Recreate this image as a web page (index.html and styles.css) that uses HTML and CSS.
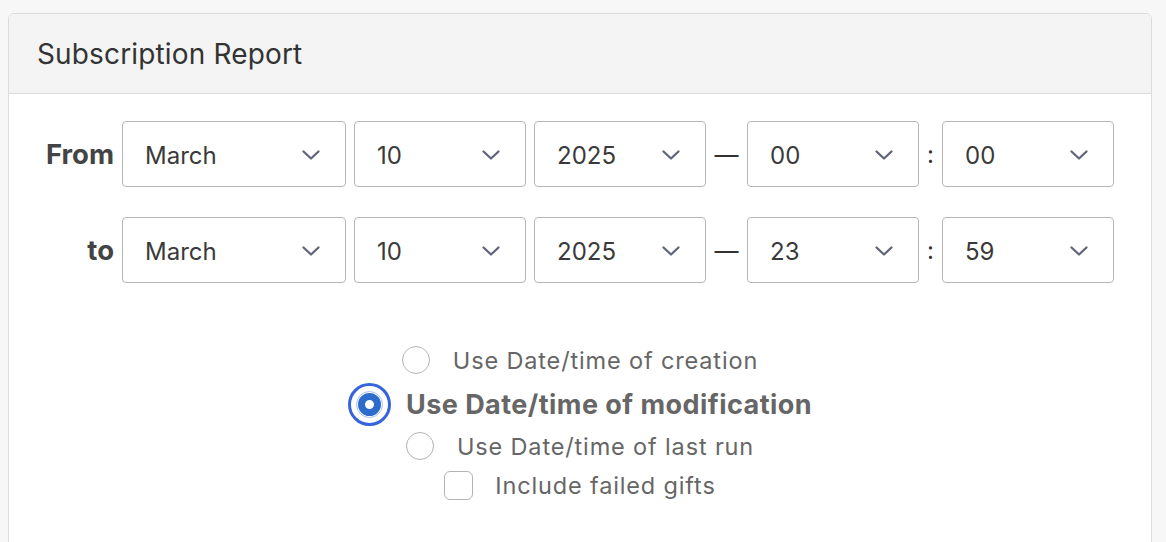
FILE: index.html
```html
<!DOCTYPE html>
<html lang="en">
<head>
<meta charset="utf-8">
<title>Subscription Report</title>
<link rel="stylesheet" href="styles.css">
</head>
<body>
<div class="card">
  <div class="card-header">Subscription Report</div>
  <div class="card-body">
    <div class="date-row">
      <label class="row-label">From</label>
      <div class="select sel-month"><span>March</span><svg class="chev" viewBox="0 0 18 10"><polyline points="1.5,1.5 9,8.5 16.5,1.5"/></svg></div>
      <div class="select"><span>10</span><svg class="chev" viewBox="0 0 18 10"><polyline points="1.5,1.5 9,8.5 16.5,1.5"/></svg></div>
      <div class="select"><span>2025</span><svg class="chev" viewBox="0 0 18 10"><polyline points="1.5,1.5 9,8.5 16.5,1.5"/></svg></div>
      <span class="sep dash">—</span>
      <div class="select"><span>00</span><svg class="chev" viewBox="0 0 18 10"><polyline points="1.5,1.5 9,8.5 16.5,1.5"/></svg></div>
      <span class="sep colon">:</span>
      <div class="select"><span>00</span><svg class="chev" viewBox="0 0 18 10"><polyline points="1.5,1.5 9,8.5 16.5,1.5"/></svg></div>
    </div>
    <div class="date-row">
      <label class="row-label">to</label>
      <div class="select sel-month"><span>March</span><svg class="chev" viewBox="0 0 18 10"><polyline points="1.5,1.5 9,8.5 16.5,1.5"/></svg></div>
      <div class="select"><span>10</span><svg class="chev" viewBox="0 0 18 10"><polyline points="1.5,1.5 9,8.5 16.5,1.5"/></svg></div>
      <div class="select"><span>2025</span><svg class="chev" viewBox="0 0 18 10"><polyline points="1.5,1.5 9,8.5 16.5,1.5"/></svg></div>
      <span class="sep dash">—</span>
      <div class="select"><span>23</span><svg class="chev" viewBox="0 0 18 10"><polyline points="1.5,1.5 9,8.5 16.5,1.5"/></svg></div>
      <span class="sep colon">:</span>
      <div class="select"><span>59</span><svg class="chev" viewBox="0 0 18 10"><polyline points="1.5,1.5 9,8.5 16.5,1.5"/></svg></div>
    </div>

    <div class="options">
      <div class="opt opt-1"><span class="radio"></span><span class="opt-label">Use Date/time of creation</span></div>
      <div class="opt opt-2"><span class="radio radio-on"><span class="radio-dot"></span></span><span class="opt-label opt-bold">Use Date/time of modification</span></div>
      <div class="opt opt-3"><span class="radio"></span><span class="opt-label">Use Date/time of last run</span></div>
      <div class="opt opt-4"><span class="checkbox"></span><span class="opt-label">Include failed gifts</span></div>
    </div>
  </div>
</div>
</body>
</html>
```

FILE: styles.css
```css
html, body {
  margin: 0;
  padding: 0;
}
html {
  overflow: hidden;
}
body {
  background: #f7f7f7;
  font-family: Inter, "Noto Sans", "Liberation Sans", sans-serif;
  color: #333;
  height: 542px;
  overflow: hidden;
}
.card {
  margin: 13px 14px 0 8px;
  background: #fff;
  border: 1px solid #dcdcdc;
  border-radius: 6px;
  height: 560px;
  overflow: hidden;
}
.card-header {
  height: 80px;
  box-sizing: border-box;
  background: #f4f4f4;
  border-bottom: 1px solid #dcdcdc;
  padding-left: 28px;
  display: flex;
  align-items: center;
  font-size: 28px;
  letter-spacing: 0.15px;
  color: #333;
}
.card-body {
  padding: 27px 0 0 28px;
}
.date-row {
  display: flex;
  align-items: center;
  height: 66px;
}
.date-row + .date-row {
  margin-top: 30px;
}
.row-label {
  width: 77px;
  margin-right: 8px;
  text-align: right;
  font-weight: 700;
  font-size: 27.5px;
  color: #444;
}
.select {
  box-sizing: border-box;
  width: 172px;
  height: 66px;
  border: 1px solid #b5b5b5;
  border-radius: 4px;
  background: #fff;
  display: flex;
  align-items: center;
  justify-content: space-between;
  padding: 2px 25px 0 22px;
  font-size: 24px;
  color: #3a3a3a;
}
.select + .select {
  margin-left: 8px;
}
.sel-month {
  width: 224px;
}
.chev {
  width: 18px;
  height: 10px;
  flex: none;
}
.chev polyline {
  fill: none;
  stroke: #5d6477;
  stroke-width: 2.2;
  stroke-linecap: round;
  stroke-linejoin: round;
}
.sep {
  text-align: center;
  font-size: 24px;
  color: #333;
}
.dash {
  width: 41px;
}
.colon {
  width: 23px;
}
.options {
  margin-top: 61px;
  margin-left: -28px;
  display: flex;
  flex-direction: column;
  align-items: center;
}
.opt {
  display: flex;
  align-items: center;
  justify-content: center;
  height: 32px;
  color: #666;
  font-size: 23.5px;
  letter-spacing: 0.85px;
}
.opt-2 {
  height: 44px;
  margin-top: 6px;
}
.opt-3 {
  margin-top: 4px;
}
.opt-4 {
  margin-top: 7px;
}
.radio {
  box-sizing: border-box;
  width: 28px;
  height: 28px;
  border: 1px solid #b3b3b3;
  border-radius: 50%;
  background: #fff;
  margin-right: 23px;
  flex: none;
}
.radio-on {
  width: 43px;
  height: 43px;
  border: 3px solid #3763db;
  margin-right: 15px;
  display: flex;
  align-items: center;
  justify-content: center;
}
.radio-dot {
  box-sizing: border-box;
  width: 27px;
  height: 27px;
  border-radius: 50%;
  background: #fff;
  border: 1px solid #a9bdf0;
  display: flex;
  align-items: center;
  justify-content: center;
}
.radio-dot::after {
  content: "";
  width: 23px;
  height: 23px;
  box-sizing: border-box;
  border-radius: 50%;
  border: 7px solid #2d6ccc;
  background: #fff;
}
.checkbox {
  box-sizing: border-box;
  width: 29px;
  height: 29px;
  border: 1px solid #b3b3b3;
  border-radius: 6px;
  background: #fff;
  margin-right: 22px;
  flex: none;
}
.opt-bold {
  font-weight: 700;
  font-size: 27px;
  letter-spacing: 0.45px;
}
```
